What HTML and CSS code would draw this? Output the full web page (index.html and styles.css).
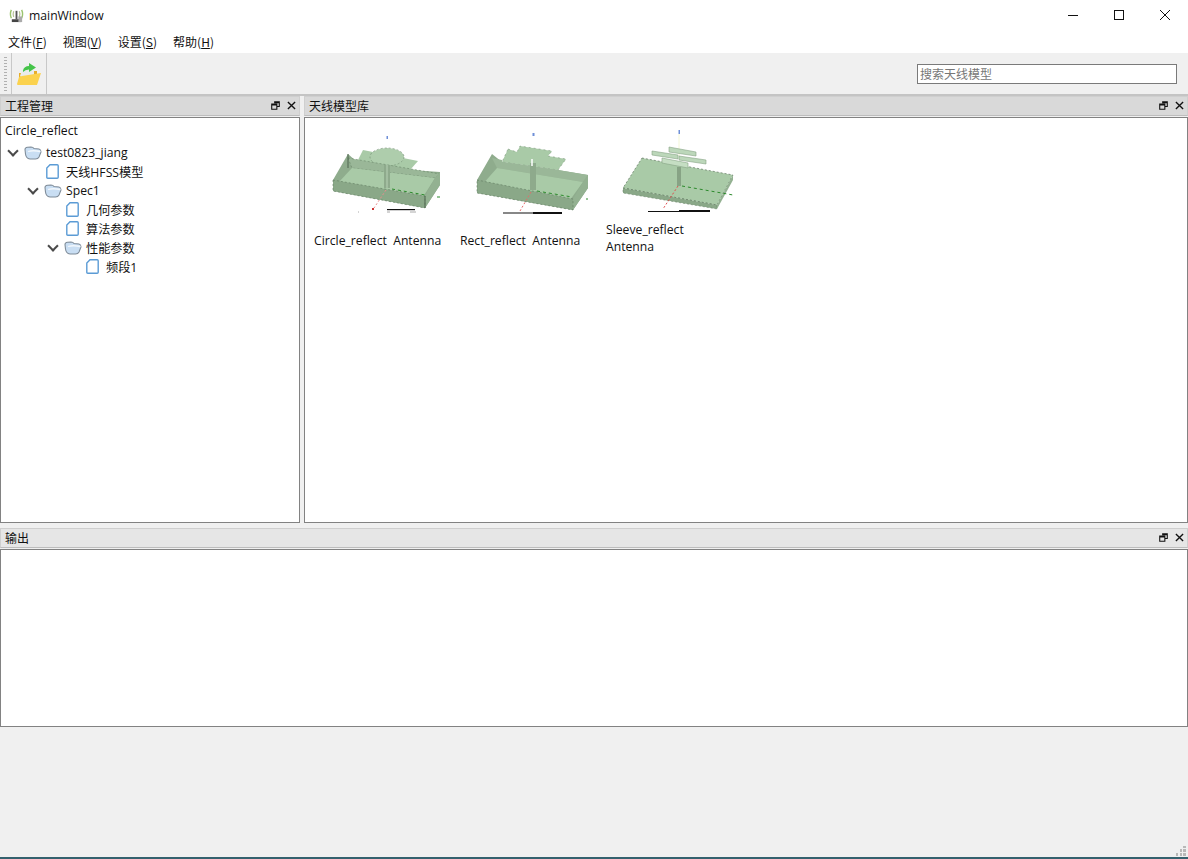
FILE: index.html
```html
<!DOCTYPE html>
<html lang="en">
<head>
    <meta charset="UTF-8">
    <title>mainWindow</title>
    <link rel="stylesheet" href="styles.css">
</head>
<body>
    <svg class="defs" width="0" height="0">
        <defs>
            <symbol id="page" viewBox="0 0 13 15">
                <path d="M4 .8H11.2Q12.2 .8 12.2 1.8V13.2Q12.2 14.200 11.2 14.200H1.8Q.8 14.200 .8 13.2V4Z" fill="#fff" stroke="#5b9bd5" stroke-width="1.4"/>
            </symbol>
            <symbol id="folder" viewBox="0 0 18 14">
                <path d="M1 3.500 Q1 1.500 3.500 1.200 L7 1 Q9 1 10 2.500 L15 3 Q17 3.500 17 6 L15 11 Q14 13 11.500 13 L6 13 Q2 12.500 1.500 8Z" fill="#c9def3" stroke="#7f8c99" stroke-width="1.100"/>
                <path d="M4 5.500 Q9 4 16.500 5.500" fill="none" stroke="#f2f7fc" stroke-width="1.300"/>
            </symbol>
            <symbol id="dock-float" viewBox="0 0 10 10">
                <path d="M3.500 .8H9.200V6.200H7M.8 3.500H6.500V9.200H.8Z M.8 4.500H6.500 M3.500 1.800H9.200" fill="none" stroke="#111" stroke-width="1.200"/>
            </symbol>
            <symbol id="dock-close" viewBox="0 0 10 10">
                <path d="M1 1 9 9M9 1 1 9" stroke="#111" stroke-width="1.500"/>
            </symbol>
        </defs>
    </svg>

    <div class="titlebar">
        <div class="app-title">
            <svg class="app-icon" viewBox="0 0 16 16">
                <path d="M2.500 2Q.5 6.500 2.500 11M13.500 2Q15.500 6.500 13.500 11" fill="none" stroke="#9cc46e" stroke-width="1.500"/>
                <path d="M5 3.500Q3.800 6.500 5 9.500M11 3.500Q12.200 6.500 11 9.500" fill="none" stroke="#b8c49a" stroke-width="1.300"/>
                <rect x="7" y="3" width="2" height="9" fill="#555"/>
                <rect x="3" y="12" width="10" height="3" fill="#444"/>
                <rect x="10" y="9" width="4" height="6" fill="#aaa"/>
            </svg>
            <span>mainWindow</span>
        </div>
        <div class="win-buttons">
            <button class="win-btn"><svg width="12" height="12" viewBox="0 0 12 12"><path d="M1 6.500H11" stroke="#111"/></svg></button>
            <button class="win-btn"><svg width="12" height="12" viewBox="0 0 12 12"><rect x="1.500" y="1.500" width="9" height="9" fill="none" stroke="#111"/></svg></button>
            <button class="win-btn"><svg width="12" height="12" viewBox="0 0 12 12"><path d="M1 1 11 11M11 1 1 11" stroke="#111"/></svg></button>
        </div>
    </div>

    <ul class="menubar">
        <li>文件(<u>F</u>)</li>
        <li>视图(<u>V</u>)</li>
        <li>设置(<u>S</u>)</li>
        <li>帮助(<u>H</u>)</li>
    </ul>

    <div class="toolbar">
        <div class="grip"></div>
        <div class="tool-group">
            <svg class="open-icon" viewBox="0 0 26 24">
                <path d="M3 11H9L11 9H21V21H3Z" fill="#e6ad2a"/>
                <path d="M4 14 6 8 Q8 6 12 7 L18 9V16H6Z" fill="#e9ecec"/>
                <path d="M7 8.500Q8 4 13 4V1L20 5.500 13 10V7.500Q9 7.500 7 10Z" fill="#45c44a"/>
                <path d="M6 14 25 11 21 23H2Q1 23 1 22L3 15Z" fill="#fbd24e"/>
            </svg>
        </div>
        <input class="search" type="text" placeholder="搜索天线模型">
    </div>

    <div class="work-row">
        <section class="dock dock-left">
            <div class="dock-title">
                <span>工程管理</span>
                <span class="dock-tools">
                    <svg><use href="#dock-float"/></svg>
                    <svg><use href="#dock-close"/></svg>
                </span>
            </div>
            <div class="dock-body tree-body">
                <div class="tree-root">Circle_reflect</div>
                <div class="tree-row lv0"><i class="arrow"></i><svg class="ico-folder"><use href="#folder"/></svg>test0823_jiang</div>
                <div class="tree-row lv1"><i class="arrow none"></i><svg class="ico-page"><use href="#page"/></svg>天线HFSS模型</div>
                <div class="tree-row lv1"><i class="arrow"></i><svg class="ico-folder"><use href="#folder"/></svg>Spec1</div>
                <div class="tree-row lv2"><i class="arrow none"></i><svg class="ico-page"><use href="#page"/></svg>几何参数</div>
                <div class="tree-row lv2"><i class="arrow none"></i><svg class="ico-page"><use href="#page"/></svg>算法参数</div>
                <div class="tree-row lv2"><i class="arrow"></i><svg class="ico-folder"><use href="#folder"/></svg>性能参数</div>
                <div class="tree-row lv3"><i class="arrow none"></i><svg class="ico-page"><use href="#page"/></svg>频段1</div>
            </div>
        </section>

        <section class="dock dock-right">
            <div class="dock-title">
                <span>天线模型库</span>
                <span class="dock-tools">
                    <svg><use href="#dock-float"/></svg>
                    <svg><use href="#dock-close"/></svg>
                </span>
            </div>
            <div class="dock-body models">
                <figure class="model">
                    <svg class="thumb" viewBox="0 0 136 93">
                        <rect x="72.500" y="8" width="1.500" height="3" fill="#6f8fd8"/>
                        <path d="M49 22 104 33 96 42 43 34Z" fill="#a9caa7"/>
                        <ellipse cx="73" cy="29" rx="17" ry="9" fill="#aecdac" stroke="#6f8a6f" stroke-dasharray="2 2" stroke-width=".6"/>
                        <path d="M19 52 34 26 43 34 96 42 126 44V57L111 80 19 63Z" fill="#8fac8d"/>
                        <path d="M34 30 126 46 121 50 38 40Z" fill="#9ab798" stroke="#5f7a5f" stroke-dasharray="2 2" stroke-width=".5"/>
                        <path d="M24 55 38 40 121 50 109 69Z" fill="#a9caa7"/>
                        <path d="M121 50 126 44V57L111 80V68Z" fill="#93b191"/>
                        <path d="M19 52 111 68V80L19 63Z" fill="#8aa888" stroke="#5f7a5f" stroke-dasharray="2 2" stroke-width=".6"/>
                        <path d="M34 26V40M111 68V80" stroke="#4f654f"/>
                        <rect x="70" y="37" width="6" height="23" fill="#8eaa8c"/>
                        <path d="M73 37V60" stroke="#b8d2b6"/>
                        <path d="M78 61 111 67M123 69H126" stroke="#2c8a2c" stroke-dasharray="3 3"/>
                        <path d="M72 62 60 80" stroke="#e88d8d" stroke-dasharray="2 2"/>
                        <rect x="58" y="80" width="2" height="2" fill="#c33"/>
                        <rect x="73" y="81" width="28" height="1.200" fill="#111"/>
                        <path d="M44 84H45M73 84H76M96 84H102" stroke="#aaa"/>
                    </svg>
                    <figcaption>Circle_reflect&nbsp; Antenna</figcaption>
                </figure>
                <figure class="model">
                    <svg class="thumb" viewBox="0 0 136 93">
                        <rect x="72.500" y="5" width="2" height="3" fill="#6f8fd8"/>
                        <path d="M48 21 57 24 60 18 92 23 88 28 106 31 98 42 42 34Z" fill="#a9caa7" stroke="#6f8a6f" stroke-dasharray="2 3" stroke-width=".5"/>
                        <path d="M17 52 32 26 42 34 98 42 128 47V60L113 82 17 65Z" fill="#8fac8d"/>
                        <path d="M32 30 42 32 42 34 98 42 128 47 123 54 37 40Z" fill="#9ab798"/>
                        <path d="M22 57 37 40 123 54 110 72Z" fill="#a9caa7"/>
                        <path d="M123 54 128 47V60L113 82V71Z" fill="#93b191"/>
                        <path d="M17 52 113 71V82L17 65Z" fill="#8aa888" stroke="#5f7a5f" stroke-dasharray="2 2" stroke-width=".6"/>
                        <rect x="70" y="35" width="6" height="27" fill="#8eaa8c"/>
                        <path d="M72 31V38" stroke="#fff" stroke-width="1.500"/>
                        <path d="M77 63 112 69M126 71H128" stroke="#2c8a2c" stroke-dasharray="3 3"/>
                        <path d="M71 64 60 83" stroke="#e56b6b" stroke-dasharray="2 2"/>
                        <rect x="43" y="84.500" width="30" height="1" fill="#111"/>
                        <rect x="73" y="84" width="29" height="2" fill="#111"/>
                    </svg>
                    <figcaption>Rect_reflect&nbsp; Antenna</figcaption>
                </figure>
                <figure class="model">
                    <svg class="thumb" viewBox="0 0 136 93">
                        <rect x="72.500" y="2" width="1.500" height="4" fill="#6f8fd8"/>
                        <path d="M73 6V28" stroke="#f4f7d8"/>
                        <path d="M36 30 127 47 111 77 17 60Z" fill="#a9caa7" stroke="#4f654f" stroke-dasharray="2 2" stroke-width=".6"/>
                        <path d="M17 60 111 77V81L17 65Z" fill="#8aa888" stroke="#5f7a5f" stroke-dasharray="2 2" stroke-width=".5"/>
                        <path d="M111 77 127 47V52L111 81Z" fill="#93b191"/>
                        <path d="M46 23 72 27V31L46 27Z" fill="#bcd7ba" stroke="#86a384" stroke-width=".6"/>
                        <path d="M63 19 90 24V28L63 24Z" fill="#bcd7ba" stroke="#86a384" stroke-width=".6"/>
                        <path d="M73 28 100 32V36L73 32Z" fill="#bcd7ba" stroke="#86a384" stroke-width=".6"/>
                        <path d="M56 30 82 35V40L56 35Z" fill="#c5dec3" stroke="#86a384" stroke-width=".6"/>
                        <rect x="71" y="39" width="4" height="19" fill="#87a385"/>
                        <path d="M76 58 127 67" stroke="#2c8a2c" stroke-dasharray="3 3"/>
                        <path d="M72 58 57 81" stroke="#e04f4f" stroke-dasharray="2 2"/>
                        <rect x="42" y="83" width="31" height="1" fill="#111"/>
                        <rect x="73" y="82" width="31" height="2" fill="#111"/>
                    </svg>
                    <figcaption class="wrapped">Sleeve_reflect<br>Antenna</figcaption>
                </figure>
            </div>
        </section>
    </div>

    <section class="dock dock-output">
        <div class="dock-title">
            <span>输出</span>
            <span class="dock-tools">
                <svg><use href="#dock-float"/></svg>
                <svg><use href="#dock-close"/></svg>
            </span>
        </div>
        <div class="dock-body"></div>
    </section>

    <div class="statusbar">
        <svg class="size-grip" viewBox="0 0 10 10" width="10" height="10">
            <path d="M7 0h3v2H7zM4 3h2v3H4zM7 3h3v3H7zM0 7h2v3H0zM4 7h2v3H4zM7 7h3v3H7z" fill="#b8b8b8"/>
        </svg>
    </div>
</body>
</html>
```

FILE: styles.css
```css
* {
    box-sizing: border-box;
}

html, body {
    height: 100%;
}

body {
    margin: 0;
    display: flex;
    flex-direction: column;
    background-color: #f0f0f0;
    color: #111111;
    font-family: "Noto Sans CJK SC", "Liberation Sans", sans-serif;
    font-size: 12px;
    overflow: hidden;
}

.defs {
    position: absolute;
}

.titlebar {
    height: 30px;
    display: flex;
    justify-content: space-between;
    background-color: #ffffff;
}

.app-title {
    display: flex;
    align-items: center;
    gap: 5px;
    padding-left: 9px;
    font-family: "Open Sans", sans-serif;
    font-size: 12.2px;
}

.app-icon {
    width: 15px;
    height: 15px;
}

.win-buttons {
    display: flex;
}

.win-btn {
    width: 46px;
    height: 30px;
    padding: 0;
    border: none;
    background: none;
    display: flex;
    align-items: center;
    justify-content: center;
}

.menubar {
    height: 23px;
    margin: 0;
    padding: 0 0 0 8px;
    display: flex;
    gap: 16px;
    align-items: center;
    list-style-type: none;
    background-color: #ffffff;
    font-size: 12px;
}

.toolbar {
    height: 43px;
    padding-left: 4px;
    padding-right: 11px;
    display: flex;
    align-items: center;
    background-color: #f0f0f0;
    border-bottom: 2px solid #c4c4c4;
}

.grip {
    width: 3px;
    height: 34px;
    margin-right: 4px;
    background-image: linear-gradient(#b0b0b0 50%, transparent 50%);
    background-size: 3px 3px;
}

.tool-group {
    width: 36px;
    height: 41px;
    display: flex;
    align-items: center;
    justify-content: center;
    border-left: 1px solid #c8c8c8;
    border-right: 1px solid #c8c8c8;
}

.open-icon {
    width: 26px;
    height: 24px;
}

.search {
    width: 260px;
    height: 20px;
    margin-left: auto;
    padding: 0 2px;
    border: 1px solid #7a7a7a;
    background-color: #ffffff;
    font-family: inherit;
    font-size: 12px;
}

.search::placeholder {
    color: #777777;
}

.work-row {
    height: 427px;
    flex: none;
    display: flex;
    gap: 4px;
}

.dock {
    display: flex;
    flex-direction: column;
}

.dock-left {
    width: 300px;
}

.dock-right {
    flex: 1;
}

.dock-output {
    height: 204px;
    padding-top: 5px;
    flex: none;
}

.dock-title {
    height: 20px;
    margin-bottom: 1px;
    padding: 0 3px 2px 4px;
    display: flex;
    justify-content: space-between;
    align-items: center;
    background-color: #d9d9d9;
    border: 1px solid #cfcfcf;
    border-bottom-color: #bdbdbd;
    font-size: 12px;
}

.dock-output .dock-title {
    background-color: #e6e6e6;
}

.dock-tools {
    display: flex;
    gap: 7px;
}

.dock-tools svg {
    width: 9px;
    height: 9px;
}

.dock-body {
    flex: 1;
    background-color: #ffffff;
    border: 1px solid #828282;
}

.tree-body {
    padding: 4px 0 0 4px;
    font-size: 12.2px;
}

.tree-root {
    height: 19px;
    line-height: 17px;
    margin-bottom: 2px;
    font-family: "Open Sans", sans-serif;
}

.tree-row {
    height: 19px;
    display: flex;
    align-items: center;
    font-family: "Open Sans", "Noto Sans CJK SC", sans-serif;
}

.lv0 {
    padding-left: 0;
}

.lv1 {
    padding-left: 20px;
}

.lv2 {
    padding-left: 40px;
}

.lv3 {
    padding-left: 60px;
}

.arrow {
    width: 19px;
    height: 19px;
    position: relative;
    flex: none;
}

.arrow::before {
    content: "";
    position: absolute;
    left: 4px;
    top: 4px;
    width: 6px;
    height: 6px;
    border-right: 2px solid #4a4a4a;
    border-bottom: 2px solid #4a4a4a;
    transform: rotate(45deg);
}

.arrow.none::before {
    display: none;
}

.ico-folder {
    width: 18px;
    height: 14px;
    margin-right: 4px;
    flex: none;
}

.ico-page {
    width: 13px;
    height: 15px;
    margin: 0 7px 0 2px;
    flex: none;
}

.models {
    padding: 10px 9px;
    display: flex;
    align-items: flex-start;
    gap: 8px;
}

.model {
    width: 138px;
    margin: 0;
}

.thumb {
    display: block;
    width: 136px;
    height: 93px;
}

.model figcaption {
    margin-top: 11px;
    line-height: 17px;
    font-family: "Open Sans", sans-serif;
    font-size: 12.2px;
}

.model figcaption.wrapped {
    margin-top: 0;
}

.statusbar {
    flex: 1;
    position: relative;
    background-color: #f0f0f0;
    border-bottom: 2px solid #34616e;
}

.size-grip {
    position: absolute;
    right: 2px;
    bottom: 1px;
}
```
